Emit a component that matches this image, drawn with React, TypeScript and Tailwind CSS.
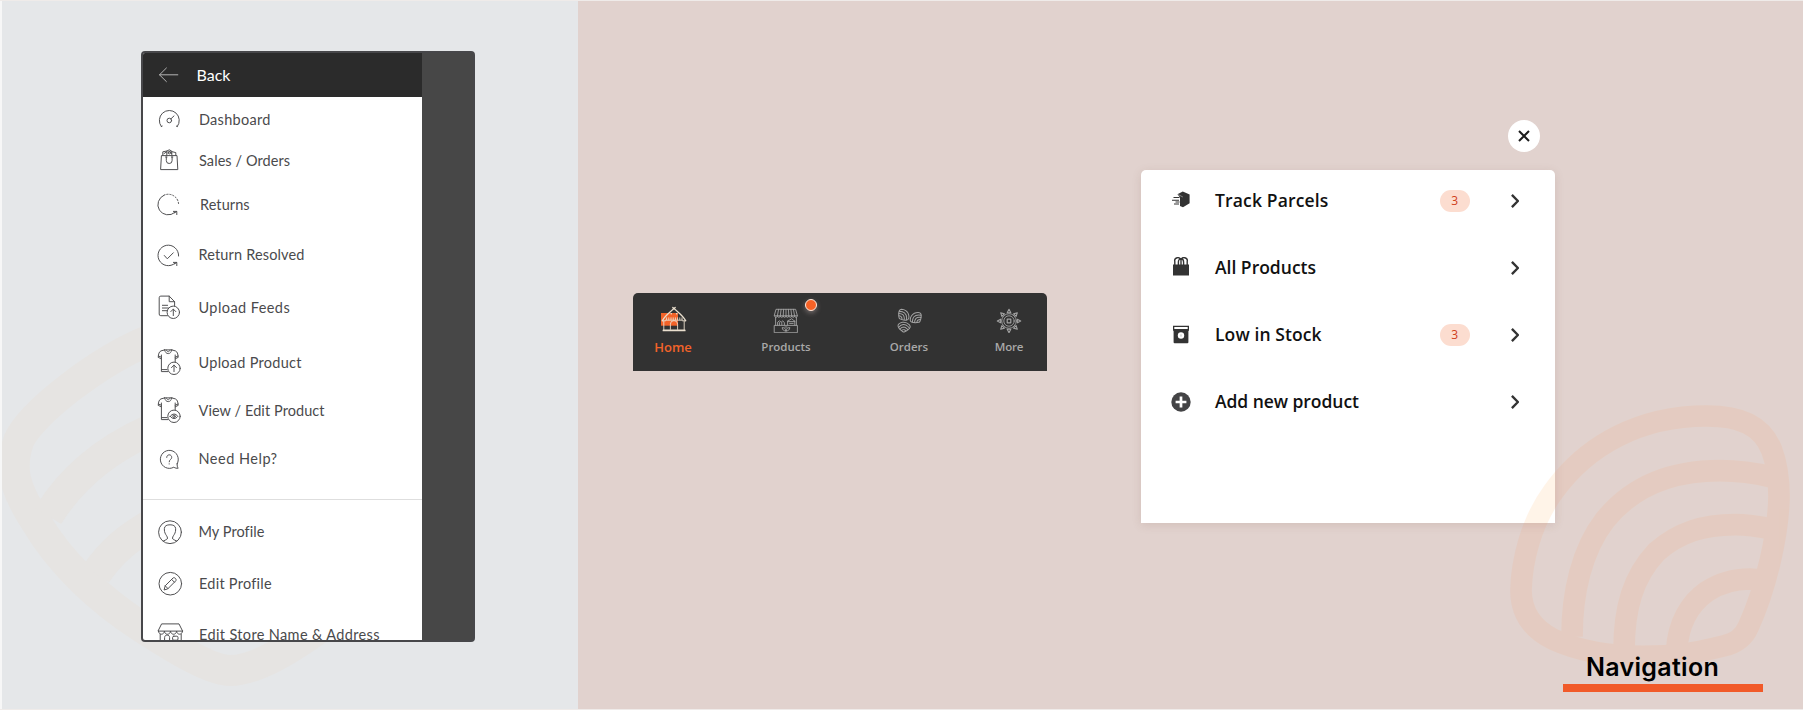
import React from "react";

type IconProps = { children: React.ReactNode; className?: string };

const LineIcon = ({ children, className = "" }: IconProps) => (
  <svg
    width="30"
    height="30"
    viewBox="0 0 30 30"
    fill="none"
    stroke="#505052"
    strokeWidth="1"
    strokeLinecap="round"
    strokeLinejoin="round"
    className={`shrink-0 ${className}`}
  >
    {children}
  </svg>
);

const Shirt = () => (
  <>
    <path d="M9.600 1.900 6 2.900C4.200 3.600 3.400 5.800 3.200 9.400l3.200 1.400V23.600H13M16.800 1.900l3.600 1c1.800.7 2.600 2.900 2.800 6.500l-3 1.400v3M9.600 1.900h7.200M6.400 10.800V7M20.200 10.800V7M6.400 21.600H12M3.400 8l3 1.200M23 8l-2.800 1.200" />
    <path d="M9.600 1.900c.6 2.600 1.800 3.700 3.600 3.700s3-1.100 3.600-3.700M11.400 2c.4 1.200 1 1.700 1.800 1.700s1.400-.5 1.800-1.700" strokeWidth="0.9" />
    <circle cx="19" cy="20.300" r="6.200" fill="white" />
  </>
);

const ReturnLoop = () => (
  <path d="M23.600 15A10.300 10.300 0 1 0 20 22.300M18.400 21.400h3.400v3.200M21.600 21.400l-1.800 1.400" />
);

const menu = [
  {
    label: "Dashboard",
    row: "h-[46px]",
    text: "ml-[14px] pb-px tracking-[0.280px]",
    icon: (
      <>
        <path d="M6.300 21.500A10 10 0 1 1 22.300 21.500" />
        <path d="m6.300 21.500.9-.4M22.300 21.500l-.9-.4M16 13.800l3-2.900" />
        <circle cx="14.300" cy="15.500" r="2.300" />
      </>
    ),
  },
  {
    label: "Sales / Orders",
    row: "h-[37px]",
    text: "ml-[14px] pb-px tracking-[0.080px]",
    icon: (
      <>
        <path d="M6.800 8.600h15.200l.8 14H6z" />
        <path d="M11.300 10v3.600a2.900 2.900 0 0 0 5.800 0V10M10.600 10h1.400M16.400 10h1.400M7.800 8.400V4.800l4-.8v4.400M11.800 4l2.600-1.200 2.400 1.400v4M16.800 4.600l4 1v2.800M9 6.600l3-2M13 6l2-1.400 1.600 2" />
        <circle cx="14.500" cy="5.600" r="1.300" />
      </>
    ),
  },
  {
    label: "Returns",
    row: "h-[50px]",
    text: "ml-[15px] pb-px tracking-[0.070px]",
    icon: (
      <>
        <path d="M9 5.200A10.300 10.300 0 1 0 19.800 22.500M18.400 21.400h3.400v3.200M21.600 21.400l-1.800 1.400" />
        <path d="M9 5.200A10.300 10.300 0 0 1 23.600 14.500" strokeDasharray="1.200 1.800" />
      </>
    ),
  },
  {
    label: "Return Resolved",
    row: "h-[51px]",
    text: "ml-[13.500px] pb-[2px] tracking-[0.150px]",
    icon: (
      <>
        <ReturnLoop />
        <path d="m9.300 14.500 3 3.300 6-6" />
      </>
    ),
  },
  {
    label: "Upload Feeds",
    row: "h-[54px]",
    text: "ml-[13.500px] pb-px tracking-[0.420px]",
    icon: (
      <>
        <path d="M12.500 22.700H5.800A1.600 1.600 0 0 1 4.200 21V4.700A1.600 1.600 0 0 1 5.800 3.100h8.400l5.400 5.600v4.200M14.200 3.100v5.600h5.400M7.400 12.300h5.200M7.400 15h6M7.400 17.700h4.600" />
        <circle cx="18.300" cy="19.300" r="6.200" fill="white" />
        <path d="M18.300 22.600v-6.400M15.800 18.600l2.500-2.500 2.500 2.500" />
      </>
    ),
  },
  {
    label: "Upload Product",
    row: "h-[56px]",
    text: "ml-[13.500px] pb-px tracking-[0.280px]",
    icon: (
      <>
        <Shirt />
        <path d="M19 23.600v-6.400M16.500 19.600l2.500-2.500 2.500 2.500" />
      </>
    ),
  },
  {
    label: "View / Edit Product",
    row: "h-[40px]",
    text: "ml-[13.500px] pb-px tracking-[0.080px]",
    icon: (
      <>
        <Shirt />
        <path d="M15.200 20.300c2.300-3 5.300-3 7.600 0-2.300 3-5.300 3-7.600 0Z" />
        <circle cx="19" cy="20.300" r="1.200" />
      </>
    ),
  },
  {
    label: "Need Help?",
    row: "h-[57px]",
    text: "ml-[13.500px] pb-[2px] tracking-[0.500px]",
    icon: (
      <>
        <path d="M22.200 18.800A9 9 0 1 0 18.800 22.200c1.400.9 2.800 1.200 4.400 1-.9-1.200-1.200-2.600-1-4.400Z" />
        <path d="M11.700 12.400c0-3.600 5-3.400 5 0 0 2.200-2.500 2-2.500 4.400M14.200 18.800v.2" />
      </>
    ),
  },
];

const account = [
  {
    label: "My Profile",
    row: "h-[65px]",
    text: "ml-[13.500px] pb-[2px] tracking-[0.050px]",
    icon: (
      <>
        <circle cx="15" cy="14.200" r="11.400" />
        <path d="M8.200 23.200c1-1 3.200-1.200 4-2.200.8-1.200-.4-3-1.400-4.400-1.200-2-1.600-4-1.400-6.200.2-2.600 2.400-3.600 5.600-3.600s5.400 1 5.600 3.600c.2 2.200-.2 4.200-1.400 6.200-1 1.400-2.200 3.200-1.400 4.400.8 1 3 1.200 4 2.200" />
      </>
    ),
  },
  {
    label: "Edit Profile",
    row: "h-[38px]",
    text: "ml-[14px] pb-px tracking-[0.250px]",
    icon: (
      <>
        <circle cx="15.300" cy="14.700" r="11.300" />
        <path d="m9.200 20.600 1-3.800 7.800-7.800c1.400-1.200 4 1.200 2.800 2.800l-7.800 7.800zM16.600 10.400l2.800 2.800M10.200 16.800l2.800 2.800" />
      </>
    ),
  },
  {
    label: "Edit Store Name & Address",
    row: "h-[65px]",
    text: "ml-[14px] pb-px tracking-[0.360px]",
    icon: (
      <>
        <path d="M7 2.900h17l3.600 7.200H3.400zM5.200 13.200V26M26.200 13.200V26M5.200 26h21" />
        <path d="M3.400 10.100c.4 4.200 5.600 4.200 6 0 .4 4.200 5.700 4.200 6.100 0 .4 4.200 5.700 4.200 6.100 0 .4 4.200 5.600 4.200 6 0M9.600 26v-9.400c0-3.400 5-3.400 5 0V26" />
        <rect x="17.600" y="15.200" width="5.400" height="4" rx="1.200" />
      </>
    ),
  },
];

type MenuItem = (typeof menu)[number];

const SideRow = ({ item }: { item: MenuItem }) => (
  <div className={`flex shrink-0 items-center pl-3 ${item.row}`}>
    <LineIcon>{item.icon}</LineIcon>
    <span className={`whitespace-nowrap text-[14.500px] leading-5 text-[#4a4a4c] ${item.text}`}>{item.label}</span>
  </div>
);

const SideMenu = () => (
  <div className="relative ml-[139px] mt-[50px] flex h-[591px] w-[334px] overflow-hidden rounded-[4px] border-2 border-[#47474a] bg-[#474747] font-['Lato',sans-serif]">
    <div className="flex w-[279px] shrink-0 flex-col overflow-hidden bg-white">
      <div className="flex h-[44px] shrink-0 items-center bg-[#2b2b2b] pl-3">
        <svg width="30" height="30" viewBox="0 0 30 30" fill="none" stroke="#b4b4b4" strokeWidth="1" strokeLinecap="round">
          <path d="M4.500 14.800h18.300M11.400 8 4.500 14.800l6.900 6.800" />
        </svg>
        <span className="ml-[11.500px] text-[16px] leading-5 text-white">Back</span>
      </div>
      {menu.map((item) => (
        <SideRow key={item.label} item={item} />
      ))}
      <div className="mt-[11px] h-px shrink-0 bg-[#dedede]" />
      {account.map((item) => (
        <SideRow key={item.label} item={item} />
      ))}
    </div>
  </div>
);

const LEAF_OUTLINE =
  "M650 78C750 78 815 105 845 180C862 225 867 270 867 320C865 430 830 590 775 710C760 745 735 760 700 768C600 793 550 799 460 799C350 799 260 780 190 748C130 718 93 670 93 600C95 520 120 400 190 305C290 165 450 78 650 78Z";
const LEAF_VEINS =
  "M246 740C246 610 275 480 345 390C430 285 550 242 690 242C740 242 790 248 850 262M402 785C402 650 430 560 500 485C570 425 640 405 735 404C770 404 800 408 850 418M560 780C565 700 600 640 650 605C690 578 740 567 780 567L820 570";

const Leaf = () => (
  <>
    <path d={LEAF_OUTLINE} />
    <path d={LEAF_VEINS} />
  </>
);

const NavIcon = ({ children }: IconProps) => (
  <svg width="28" height="28" viewBox="0 0 28 28" fill="none" stroke="#a3a3a3" strokeWidth="0.9" strokeLinejoin="round" strokeLinecap="round">
    {children}
  </svg>
);

const HomeIcon = () => (
  <NavIcon>
    <path d="M2 8h17v12.700H2z" fill="#f26329" stroke="none" />
    <g stroke="#eadfce">
      <path d="M15 3.400C12 6.600 6.600 10 3.400 15.600M15 3.400c3 3.200 8.400 6.600 11.600 12.200M13.800 2.400l2.400 2.200M16.200 2.400l-2.400 2.200" strokeWidth="1.300" />
      <path d="M3.200 15.800h3.200M23.600 15.800h3.200M4.800 16v9.600M25.200 16v9.600M11.400 24.400v-5.200a3.600 3.600 0 0 1 7.200 0v5.200" />
      <path d="M7.600 12.800v2M9.800 12.800v2M12 12.800v2M14.200 12.800v2M16.400 12.800v2M18.600 12.800v2M20.800 12.800v2M23 12.800v2M6.400 15.200h17" />
      <path d="M4.400 25.400h21.400" strokeWidth="1.700" />
      <path d="M12.200 8.800h.1M17.600 8.800h.1" strokeWidth="1.500" />
    </g>
  </NavIcon>
);

const StallIcon = () => (
  <NavIcon>
    <path d="M4.400 4.300h19.200l1.800 6.500H2.600zM2.600 10.800c0 2 2.800 2 2.800 0 0 2 2.900 2 2.900 0 0 2 2.900 2 2.900 0 0 2 2.800 2 2.800 0 0 2 2.900 2 2.900 0 0 2 2.900 2 2.900 0 0 2 2.800 2 2.800 0 0 2 2.800 2 2.800 0" />
    <path d="M6.600 4.300l-1.200 6.500M9.100 4.300l-.8 6.500M11.600 4.300l-.4 6.500M14 4.300v6.500M16.400 4.300l.4 6.500M18.900 4.300l.8 6.500M21.400 4.300l1.200 6.500" />
    <path d="M3.600 12.400v8M24.400 12.400v8M2.600 20.400h22.800v7.300H2.600zM5.600 20.200v-3l1.800-1.400 1.800 1.400 1.600-1.400 1.600 2v2.400M7.400 17.600v2.400M9.800 17.600v2.400M15.600 20.200v-4.400l2.400-1 1.800-1.200 1.400 1.600 1.600.6v4.400M15.600 16.600h7.200M17.600 18.400h3.600" />
    <path d="M14 26c-2.400 0-3.600-1.200-3.800-3.400 2.200 0 3.400.6 3.800 3.400.4-2.800 1.600-3.400 3.800-3.400-.2 2.200-1.400 3.400-3.800 3.400ZM13 22h2" />
  </NavIcon>
);

const ShellsIcon = () => (
  <NavIcon>
    <g strokeWidth="72">
      <g transform="translate(8.800 9.700) rotate(90) scale(0.0142) translate(-480 -440)">
        <Leaf />
      </g>
      <g transform="translate(20.700 12.700) scale(0.0142) translate(-480 -440)">
        <Leaf />
      </g>
      <g transform="translate(9 21.400) rotate(45) scale(0.0138) translate(-480 -440)">
        <Leaf />
      </g>
    </g>
  </NavIcon>
);

const SunIcon = () => (
  <NavIcon>
    <circle cx="14" cy="16" r="7.300" />
    <circle cx="14" cy="16" r="5.200" />
    <path d="M12.200 14.200h3.600v3.600h-3.600z" strokeWidth="1.200" />
    {[0, 45, 90, 135, 180, 225, 270, 315].map((angle) => (
      <path key={angle} d="M12.200 7.700 14 4.300l1.800 3.400z" transform={`rotate(${angle} 14 16)`} strokeWidth="1.100" />
    ))}
  </NavIcon>
);

const BottomNav = () => (
  <div className="mt-[292px] flex h-[78px] w-[414px] rounded-t-[5px] bg-[#323232] pl-[10px] pt-3 font-['Open_Sans',sans-serif] text-[11.500px] font-semibold text-[#a9a9a9]">
    <div className="flex w-[60px] flex-col items-center">
      <HomeIcon />
      <span className="mt-[6px] text-[13px] leading-4 text-[#f26329]">Home</span>
    </div>
    <div className="relative ml-[53px] flex w-[60px] flex-col items-center">
      <StallIcon />
      <span className="mt-[6px] leading-4">Products</span>
      <span className="absolute left-[49px] top-[-6px] h-3 w-3 rounded-full border border-[#ffe9dc] bg-[#f76226] shadow-[0_2px_5px_rgba(220,200,200,0.4)]" />
    </div>
    <div className="ml-[63px] flex w-[60px] flex-col items-center">
      <ShellsIcon />
      <span className="mt-[6px] leading-4">Orders</span>
    </div>
    <div className="ml-[40px] flex w-[60px] flex-col items-center">
      <SunIcon />
      <span className="mt-[6px] leading-4 tracking-[-0.200px]">More</span>
    </div>
  </div>
);

const actions = [
  {
    label: "Track Parcels",
    spacing: "tracking-[0.150px]",
    count: 3,
    icon: (
      <>
        <path d="M7.400 4.200 12.800 1.600l6.800 3v8.600l-6.600 4-3-1.200V7.600z" fill="#333" />
        <path d="M7.400 4.200 12.900 7" stroke="white" strokeWidth="0.400" />
        <path d="M3.500 7.500h6M2 10.300h7M4 14h5M5.500 12h4" stroke="#333" strokeWidth="1.100" />
      </>
    ),
  },
  {
    label: "All Products",
    spacing: "tracking-[0px]",
    icon: (
      <>
        <path d="M3 7.500h16v11H3z" fill="#333" />
        <path d="M4.800 9V4.500a3 3 0 0 1 6.200-1.400M17.200 9V4.500a3 3 0 0 0-6.200-1.400M8.400 9V5c0-2 1.200-3.200 2.600-3.200s2.600 1.200 2.600 3.200v4M11 3.100V9" stroke="#333" strokeWidth="1.400" fill="none" />
      </>
    ),
  },
  {
    label: "Low in Stock",
    spacing: "tracking-[0.100px]",
    count: 3,
    icon: (
      <>
        <path d="M3 1.800h16v5h-.6v11.400a1 1 0 0 1-1 1H4.600a1 1 0 0 1-1-1V6.800H3zM4.300 3.100v2h13.400v-2z" fill="#333" fillRule="evenodd" />
        <circle cx="11" cy="11.500" r="3.200" fill="white" />
        <path d="M11 10.400v2.200" stroke="#bbb" strokeWidth="1" />
      </>
    ),
  },
  {
    label: "Add new product",
    spacing: "tracking-[-0.050px]",
    icon: (
      <>
        <circle cx="11" cy="11" r="9.700" fill="#444446" />
        <path d="M11 5.600v10.800M5.600 11h10.800" stroke="white" strokeWidth="2.700" />
      </>
    ),
  },
];

const ActionPanel = () => (
  <div className="ml-[94px] mt-[119px] flex w-[414px] flex-col">
    <button className="mr-[15px] flex h-8 w-8 items-center justify-center self-end rounded-full bg-white" aria-label="Close">
      <svg width="12" height="12" viewBox="0 0 12 12" stroke="#1c1c1c" strokeWidth="2">
        <path d="m1 1 10 10M11 1 1 11" />
      </svg>
    </button>
    <div className="mt-[18px] flex h-[353px] flex-col gap-[33px] rounded-t-[5px] bg-white pt-[14px] font-['Open_Sans',sans-serif] shadow-[0_2px_10px_rgba(120,80,70,0.15)]">
      {actions.map((a) => (
        <div key={a.label} className="flex h-[34px] items-center pl-[29px] pr-[36px]">
          <svg width="22" height="22" viewBox="0 0 22 22" fill="none" className="shrink-0">
            {a.icon}
          </svg>
          <span className={`ml-[23px] flex-1 whitespace-nowrap pb-[2px] text-[17.500px] font-semibold leading-6 text-[#111] ${a.spacing}`}>{a.label}</span>
          {a.count && (
            <span className="mr-[41px] flex h-[22px] w-[30.500px] items-center justify-center rounded-full bg-[#fcddd0] text-[12px] text-[#cf3f1a]">{a.count}</span>
          )}
          <svg width="8" height="14" viewBox="0 0 8 14" fill="none" stroke="#333" strokeWidth="2.400">
            <path d="m.9.9 6 6.100-6 6.100" />
          </svg>
        </div>
      ))}
    </div>
  </div>
);

export default function App() {
  return (
    <div className="relative flex h-[710px] w-[1803px] overflow-hidden border-y border-[#efebe9] bg-[#f7f7f7] pl-[2px]">
      <div className="relative h-full w-[576px] shrink-0 overflow-hidden bg-[#e5e7e9]">
        <svg className="absolute left-0 top-0" width="576" height="708" viewBox="2 1 576 708" fill="none" stroke="#e6e4e2" strokeWidth="31">
          <path d="M150 340C100 360 32 412 19 440C9 468 14 488 36 522C60 563 100 600 140 626C180 652 212 670.500 230 670.500C255 670.500 290 650 330 620" />
          <path d="M48 516C70 480 105 450 150 430M96 574C112 550 130 537 150 525" />
        </svg>
        <SideMenu />
      </div>
      <div className="flex h-full flex-1 items-start bg-[#e1d2ce] pl-[55px]">
        <BottomNav />
        <ActionPanel />
      </div>
      <svg className="pointer-events-none absolute left-[1490px] top-[389px]" width="313" height="320" viewBox="0 0 939 960" fill="none" strokeWidth="65">
        <defs>
          <clipPath id="over-panel">
            <path d="M0 0H195V399H0z" />
          </clipPath>
          <clipPath id="over-page">
            <path d="M195 0H939V960H0V399H195z" />
          </clipPath>
        </defs>
        <g opacity="0.1" stroke="#ff9b2d" clipPath="url(#over-panel)">
          <Leaf />
        </g>
        <g opacity="0.11" stroke="#ff965a" clipPath="url(#over-page)">
          <Leaf />
        </g>
      </svg>
      <div className="absolute left-[1563px] top-[650px] w-[200px] border-b-[8px] border-[#f15a29] font-['Inter',sans-serif]">
        <div className="h-[33px] pl-[23px] text-[25px] font-semibold leading-[32px] tracking-[0.300px] text-black">Navigation</div>
      </div>
    </div>
  );
}
